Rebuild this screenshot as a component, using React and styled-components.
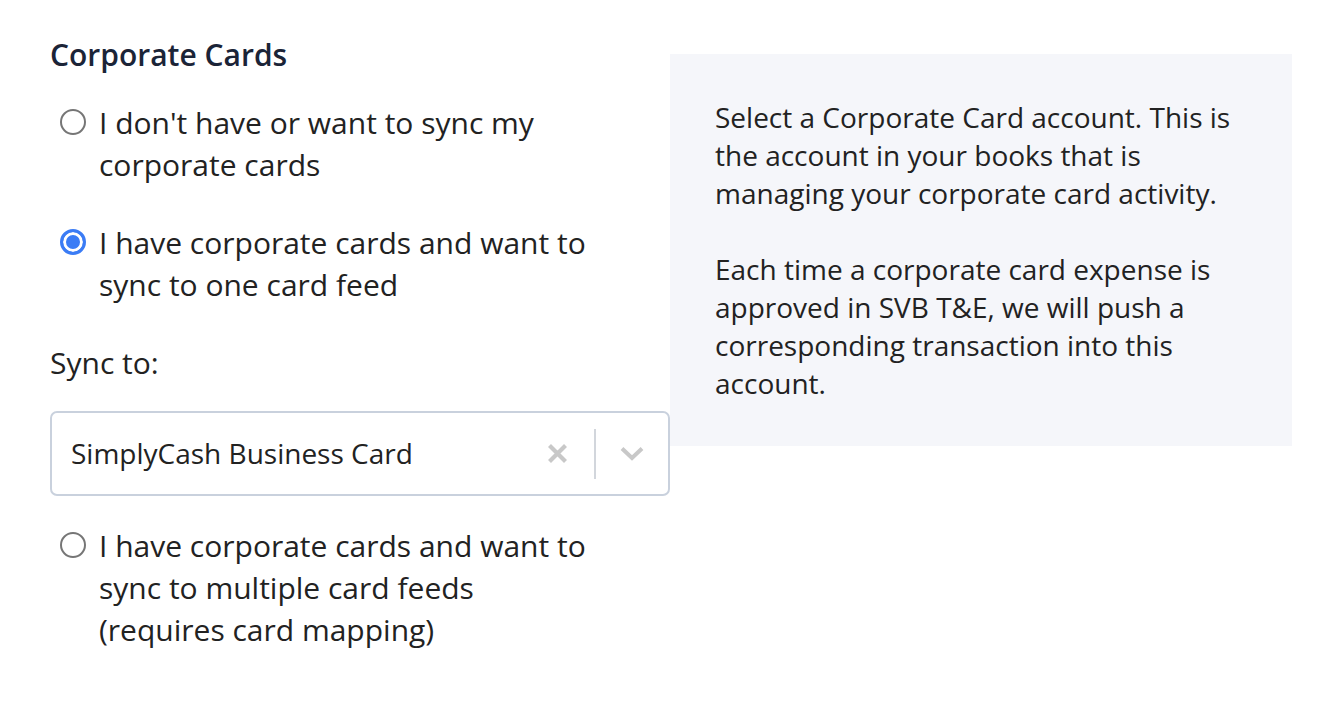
import React from "react";
import styled, { createGlobalStyle } from "styled-components";

const GlobalStyle = createGlobalStyle`
  body {
    margin: 0;
    background: #fff;
    font-family: "Open Sans", "Liberation Sans", sans-serif;
    color: #222;
  }
`;

const Page = styled.div`
  display: flex;
  align-items: flex-start;
  padding: 34px 0 0 50px;
`;

const Form = styled.div`
  width: 620px;
  flex: none;
`;

const Heading = styled.h2`
  margin: 0 0 26px;
  font-size: 30px;
  line-height: 42px;
  font-weight: 600;
  color: #1b2437;
`;

const Option = styled.label`
  display: flex;
  align-items: flex-start;
  gap: 13px;
  padding-left: 10px;
  margin-bottom: 36px;
  font-size: 30px;
  line-height: 42px;
  cursor: pointer;
`;

const Radio = styled.span`
  flex: none;
  box-sizing: border-box;
  width: 26px;
  height: 26px;
  margin-top: 7px;
  border-radius: 50%;
  border: ${p => (p.checked ? "3px solid #3b7cf5" : "2px solid #767676")};
  background: ${p => (p.checked ? "#3b7cf5" : "#fff")};
  box-shadow: ${p => (p.checked ? "inset 0 0 0 3px #fff" : "none")};
`;

const FieldLabel = styled.div`
  font-size: 30px;
  line-height: 42px;
  margin: 2px 0 27px;
`;

const Select = styled.div`
  display: flex;
  align-items: center;
  box-sizing: border-box;
  height: 85px;
  margin-bottom: 29px;
  border: 2px solid #c9d1dd;
  border-radius: 7px;
  padding-left: 19px;
`;

const Value = styled.div`
  flex: 1;
  font-size: 28px;
  line-height: 38px;
  margin-top: -2px;
`;

const Clear = styled.div`
  display: flex;
  align-items: center;
  justify-content: center;
  width: 74px;
  height: 100%;
`;

const Divider = styled.div`
  width: 2px;
  height: 50px;
  background: #d2d6dc;
`;

const Toggle = styled.div`
  display: flex;
  align-items: center;
  justify-content: center;
  width: 72px;
  height: 100%;
`;

const Panel = styled.div`
  width: 622px;
  flex: none;
  box-sizing: border-box;
  margin-top: 20px;
  padding: 44px 45px 44px;
  background: #f5f6fa;
  font-size: 28px;
  line-height: 38px;
`;

const Para = styled.p`
  margin: 0 0 38px;
  &:last-child {
    margin-bottom: 0;
  }
`;

export default function App() {
  return (
    <>
      <GlobalStyle />
      <Page>
        <Form>
          <Heading>Corporate Cards</Heading>
          <Option>
            <Radio />
            <span>
              I don't have or want to sync my
              <br />
              corporate cards
            </span>
          </Option>
          <Option>
            <Radio checked />
            <span>
              I have corporate cards and want to
              <br />
              sync to one card feed
            </span>
          </Option>
          <FieldLabel>Sync to:</FieldLabel>
          <Select>
            <Value>SimplyCash Business Card</Value>
            <Clear>
              <svg width="21" height="21" viewBox="0 0 21 21">
                <path d="M2.5 2.5 L18.5 18.5 M18.5 2.5 L2.5 18.5" stroke="#c8c8c8" strokeWidth="4.2" />
              </svg>
            </Clear>
            <Divider />
            <Toggle>
              <svg width="24" height="15" viewBox="0 0 24 15">
                <path d="M2 2.5 L12 12 L22 2.5" stroke="#c8c8c8" strokeWidth="4" fill="none" />
              </svg>
            </Toggle>
          </Select>
          <Option>
            <Radio />
            <span>
              I have corporate cards and want to
              <br />
              sync to multiple card feeds
              <br />
              (requires card mapping)
            </span>
          </Option>
        </Form>
        <Panel>
          <Para>
            Select a Corporate Card account. This is the account in your books that is managing your
            corporate card activity.
          </Para>
          <Para>
            Each time a corporate card expense is approved in SVB T&amp;E, we will push a corresponding
            transaction into this account.
          </Para>
        </Panel>
      </Page>
    </>
  );
}
